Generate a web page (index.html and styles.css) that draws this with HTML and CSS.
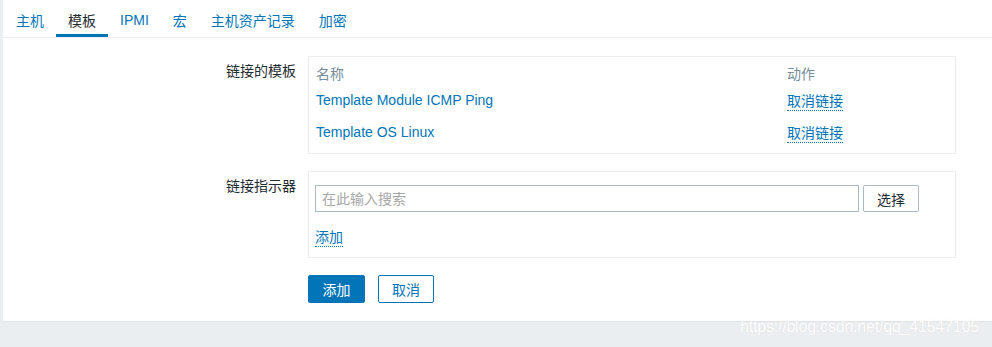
FILE: index.html
```html
<!DOCTYPE html>
<html lang="zh-CN">
<head>
    <meta charset="UTF-8">
    <meta name="viewport" content="width=device-width, initial-scale=1.0">
    <title>模板</title>
    <link rel="stylesheet" href="styles.css">
</head>
<body>
    <div class="panel">
        <ul class="tabs">
            <li><a href="#">主机</a></li>
            <li class="active"><a href="#">模板</a></li>
            <li><a href="#">IPMI</a></li>
            <li><a href="#">宏</a></li>
            <li><a href="#">主机资产记录</a></li>
            <li><a href="#">加密</a></li>
        </ul>

        <form class="form">
            <div class="form-row">
                <label class="form-label">链接的模板</label>
                <div class="form-field box linked">
                    <div class="table-row table-head">
                        <span class="col-name">名称</span>
                        <span>动作</span>
                    </div>
                    <div class="table-row">
                        <a class="col-name link" href="#">Template Module ICMP Ping</a>
                        <span><a class="dotted" href="#">取消链接</a></span>
                    </div>
                    <div class="table-row">
                        <a class="col-name link" href="#">Template OS Linux</a>
                        <span><a class="dotted" href="#">取消链接</a></span>
                    </div>
                </div>
            </div>

            <div class="form-row">
                <label class="form-label">链接指示器</label>
                <div class="form-field box indicator">
                    <div class="search-line">
                        <input type="text" class="search" placeholder="在此输入搜索">
                        <button type="button" class="btn-alt">选择</button>
                    </div>
                    <div class="add-line"><a class="dotted" href="#">添加</a></div>
                </div>
            </div>

            <div class="form-row">
                <span class="form-label"></span>
                <div class="form-actions">
                    <button type="submit" class="btn-primary">添加</button>
                    <button type="button" class="btn-outline">取消</button>
                </div>
            </div>
        </form>
    </div>

    <div class="watermark">https://blog.csdn.net/qq_41547105</div>
</body>
</html>
```

FILE: styles.css
```css
body {
    margin: 0;
    background-color: #ebeef0;
    font-family: 'Liberation Sans', Arial, 'Noto Sans CJK SC', sans-serif;
    font-size: 14px;
    color: #1f2c33;
}
a {
    color: #0275b8;
    text-decoration: none;
}
.panel {
    margin-left: 3px;
    height: 322px;
    background-color: white;
    border-bottom: 1px solid #dfe4e7;
    box-sizing: border-box;
}
.tabs {
    list-style: none;
    margin: 0;
    padding: 0 0 0 1px;
    display: flex;
    height: 38px;
    border-bottom: 1px solid #ebeef0;
    box-sizing: border-box;
}
.tabs li {
    height: 37px;
    padding: 6px 12px 0;
    box-sizing: border-box;
    border-bottom: 3px solid transparent;
    display: flex;
    align-items: center;
}
.tabs li.active {
    border-bottom-color: #0275b8;
}
.tabs li.active a {
    color: #1f2c33;
}
.form {
    padding-top: 18px;
}
.form-row {
    display: flex;
    margin-bottom: 17px;
}
.form-label {
    width: 305px;
    padding-right: 12px;
    padding-top: 6px;
    text-align: right;
    box-sizing: border-box;
    flex-shrink: 0;
    line-height: 18px;
}
.form-field {
    width: 648px;
}
.box {
    border: 1px solid #ebeef0;
    box-sizing: border-box;
}
.linked {
    padding: 4px 7px 5px;
}
.table-row {
    display: flex;
    height: 32px;
    align-items: center;
}
.table-head {
    height: 23px;
    color: #768d99;
}
.col-name {
    width: 471px;
}
.dotted {
    border-bottom: 1px dotted #0275b8;
    padding-bottom: 1px;
}
.indicator {
    height: 87px;
    padding: 13px 6px 0;
}
.search-line {
    display: flex;
    gap: 4px;
}
.search {
    width: 544px;
    height: 27px;
    box-sizing: border-box;
    border: 1px solid #acbbc2;
    padding: 0 6px;
    font: inherit;
    color: #1f2c33;
    outline: none;
}
.search::placeholder {
    color: #a7a7a7;
}
button {
    font: inherit;
    height: 28px;
    box-sizing: border-box;
    border-radius: 2px;
    cursor: pointer;
}
.btn-alt {
    width: 56px;
    height: 27px;
    background-color: white;
    border: 1px solid #acbbc2;
    color: #1f2c33;
}
.add-line {
    margin-top: 16px;
    line-height: 18px;
}
.form-actions {
    display: flex;
    gap: 13px;
}
.btn-primary {
    width: 57px;
    background-color: #0275b8;
    border: 1px solid #0275b8;
    color: white;
}
.btn-outline {
    width: 56px;
    background-color: white;
    border: 1px solid #0275b8;
    color: #0275b8;
}
.watermark {
    position: absolute;
    left: 740px;
    top: 318px;
    font-size: 16px;
    color: #ffffff;
    text-shadow: 0 0 1px rgba(0, 0, 0, 0.12);
    letter-spacing: -0.2px;
}
```
